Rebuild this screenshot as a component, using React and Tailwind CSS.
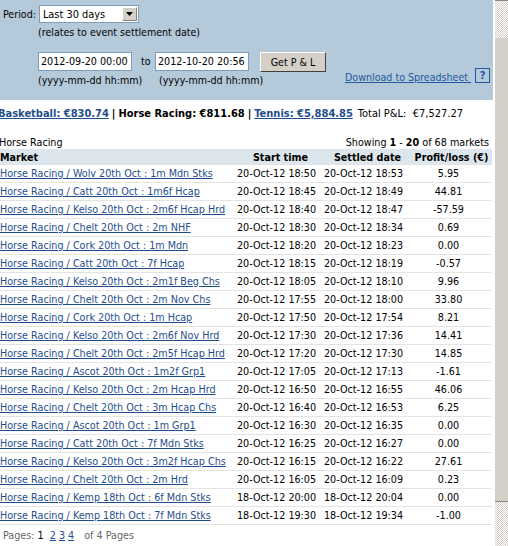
import React from "react";

const rows = [
  ["Wolv 20th Oct : 1m Mdn Stks", "20-Oct-12 18:50", "20-Oct-12 18:53", "5.95"],
  ["Catt 20th Oct : 1m6f Hcap", "20-Oct-12 18:45", "20-Oct-12 18:49", "44.81"],
  ["Kelso 20th Oct : 2m6f Hcap Hrd", "20-Oct-12 18:40", "20-Oct-12 18:47", "-57.59"],
  ["Chelt 20th Oct : 2m NHF", "20-Oct-12 18:30", "20-Oct-12 18:34", "0.69"],
  ["Cork 20th Oct : 1m Mdn", "20-Oct-12 18:20", "20-Oct-12 18:23", "0.00"],
  ["Catt 20th Oct : 7f Hcap", "20-Oct-12 18:15", "20-Oct-12 18:19", "-0.57"],
  ["Kelso 20th Oct : 2m1f Beg Chs", "20-Oct-12 18:05", "20-Oct-12 18:10", "9.96"],
  ["Chelt 20th Oct : 2m Nov Chs", "20-Oct-12 17:55", "20-Oct-12 18:00", "33.80"],
  ["Cork 20th Oct : 1m Hcap", "20-Oct-12 17:50", "20-Oct-12 17:54", "8.21"],
  ["Kelso 20th Oct : 2m6f Nov Hrd", "20-Oct-12 17:30", "20-Oct-12 17:36", "14.41"],
  ["Chelt 20th Oct : 2m5f Hcap Hrd", "20-Oct-12 17:20", "20-Oct-12 17:30", "14.85"],
  ["Ascot 20th Oct : 1m2f Grp1", "20-Oct-12 17:05", "20-Oct-12 17:13", "-1.61"],
  ["Kelso 20th Oct : 2m Hcap Hrd", "20-Oct-12 16:50", "20-Oct-12 16:55", "46.06"],
  ["Chelt 20th Oct : 3m Hcap Chs", "20-Oct-12 16:40", "20-Oct-12 16:53", "6.25"],
  ["Ascot 20th Oct : 1m Grp1", "20-Oct-12 16:30", "20-Oct-12 16:35", "0.00"],
  ["Catt 20th Oct : 7f Mdn Stks", "20-Oct-12 16:25", "20-Oct-12 16:27", "0.00"],
  ["Kelso 20th Oct : 3m2f Hcap Chs", "20-Oct-12 16:15", "20-Oct-12 16:22", "27.61"],
  ["Chelt 20th Oct : 2m Hrd", "20-Oct-12 16:05", "20-Oct-12 16:09", "0.23"],
  ["Kemp 18th Oct : 6f Mdn Stks", "18-Oct-12 20:00", "18-Oct-12 20:04", "0.00"],
  ["Kemp 18th Oct : 7f Mdn Stks", "18-Oct-12 19:30", "18-Oct-12 19:34", "-1.00"],
];

const checker =
  "bg-[repeating-conic-gradient(#d4d0c8_0%_25%,#ffffff_0%_50%)] bg-[length:2px_2px]";

export default function App() {
  return (
    <div
      className="flex w-[508px] h-[546px] overflow-hidden bg-white text-[10.7px] leading-[13px] text-black whitespace-nowrap"
      style={{ fontFamily: '"DejaVu Sans Condensed", "Liberation Sans", sans-serif' }}
    >
      <div className="w-[494px] shrink-0 flex flex-col">
        {/* top filter panel */}
        <div className="h-[100px] w-[493px] bg-[#b4c9d9] pl-[3px] pt-[5px] text-[10.6px]">
          <div className="flex items-center gap-[3px]">
            <span>Period:</span>
            <div className="flex items-center h-[18px] w-[100px] bg-white border border-[#7f9db9] text-[10.9px]">
              <span className="flex-1 pl-[3px]">Last 30 days</span>
              <div className="w-[15px] h-[14px] mr-[1px] bg-[#d4d0c8] border border-t-white border-l-white border-r-[#808080] border-b-[#808080] flex items-center justify-center">
                <svg width="7" height="4" viewBox="0 0 7 4"><path d="M0 0h7L3.5 4z" fill="#000" /></svg>
              </div>
            </div>
          </div>
          <div className="pl-[35px] pt-[3px]">(relates to event settlement date)</div>
          <div className="flex items-start mt-[13px] pl-[35px]">
            <div className="flex flex-col w-[94px]">
              <div className="w-[94px] h-[19px] bg-white border border-[#7f9db9] flex items-center pl-[2px] text-[10.7px]">2012-09-20 00:00</div>
              <span className="mt-[3px]">(yyyy-mm-dd hh:mm)</span>
            </div>
            <div className="flex flex-col w-[117px]">
              <div className="flex items-center h-[19px]">
                <span className="w-[23px] pl-[9px]">to</span>
                <div className="w-[94px] h-[19px] bg-white border border-[#7f9db9] flex items-center pl-[2px] text-[10.7px]">2012-10-20 20:56</div>
              </div>
              <span className="mt-[3px] pl-[27px]">(yyyy-mm-dd hh:mm)</span>
            </div>
            <div className="flex flex-col ml-[11px]">
              <div className="w-[66px] h-[20px] bg-[#d4d0c8] border border-t-white border-l-white border-r-[#404040] border-b-[#404040] flex items-center justify-center">Get P &amp; L</div>
            </div>
            <div className="ml-[19px] mt-[19px] flex items-center">
              <span className="text-[#1f5aa0] underline">Download to Spreadsheet&nbsp;</span>
              <span className="ml-[4px] mt-[-5px] w-[15px] h-[15px] border border-[#1f5aa0] text-[#1f5aa0] font-bold flex items-center justify-center text-[11px]">?</span>
            </div>
          </div>
        </div>

        {/* sport totals */}
        <div className="h-[20px] mt-[3px] flex items-center ml-[-2px] text-[11px]">
          <span className="font-bold text-[#1f4e8c] underline">Basketball: €830.74</span>
          <span className="mx-[3px] font-bold">|</span>
          <span className="font-bold">Horse Racing: €811.68</span>
          <span className="mx-[3px] font-bold">|</span>
          <span className="font-bold text-[#1f4e8c] underline">Tennis: €5,884.85</span>
          <span className="ml-[5px]">Total P&amp;L:&nbsp; €7,527.27</span>
        </div>

        {/* section heading */}
        <div className="flex items-end justify-between mt-[12px] w-[489px] h-[14px]">
          <span className="ml-[-1px]">Horse Racing</span>
          <span>
            Showing <b>1</b> - <b>20</b> of 68 markets
          </span>
        </div>

        {/* table */}
        <div className="w-[492px]">
          <div className="grid grid-cols-[237px_87px_87px_1fr] h-[16px] items-center bg-[#dde6ec] font-bold">
            <span>Market</span>
            <span className="text-center">Start time</span>
            <span className="text-center">Settled date</span>
            <span className="text-center">Profit/loss (€)</span>
          </div>
          {rows.map((r, i) => (
            <div
              key={i}
              className="grid grid-cols-[237px_87px_87px_1fr] h-[18px] items-center border-b border-[#e4e4e4]"
            >
              <span className="text-[#1f4e8c] underline">Horse Racing / {r[0]}</span>
              <span>{r[1]}</span>
              <span>{r[2]}</span>
              <span className="text-center pr-[6px]">{r[3]}</span>
            </div>
          ))}
          <div className="mt-[4px] pl-[3px] text-[#666]">
            Pages: <span className="text-black">1</span>{" "}
            <span className="text-[#1f4e8c] underline ml-[3px]">2</span>{" "}
            <span className="text-[#1f4e8c] underline">3</span>{" "}
            <span className="text-[#1f4e8c] underline">4</span>
            <span className="ml-[10px]">of 4 Pages</span>
          </div>
        </div>
      </div>

      {/* scrollbar column */}
      <div className="w-[14px] ml-[1px] flex flex-col">
        <div className={`h-[38px] border-t border-[#888] ${checker}`} />
        <div className="h-[464px] bg-[#d4d0c8] border-b border-[#888]" />
        <div className={`flex-1 ${checker}`} />
      </div>
    </div>
  );
}
